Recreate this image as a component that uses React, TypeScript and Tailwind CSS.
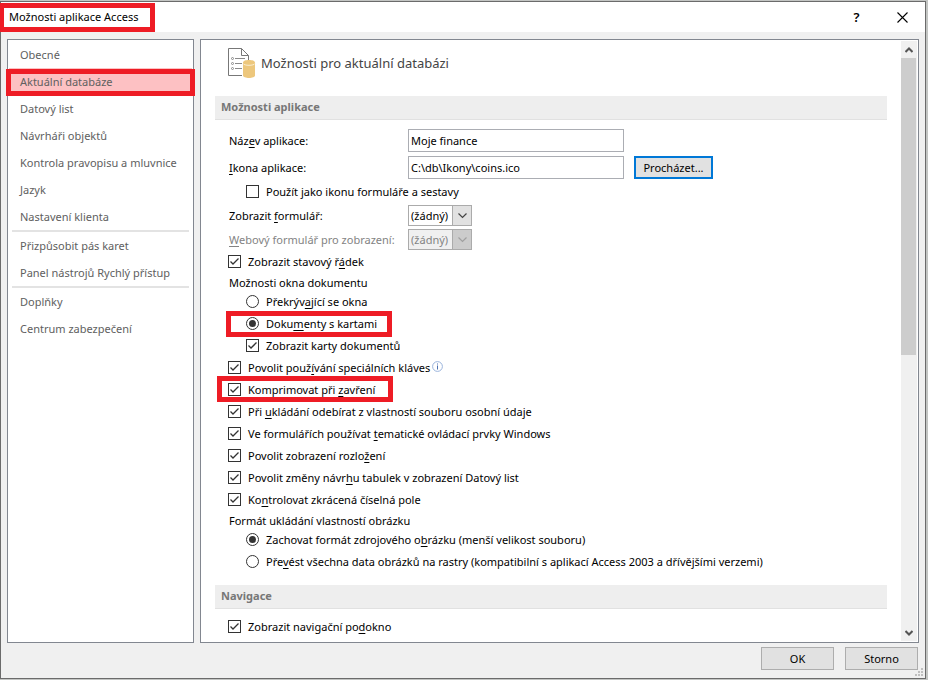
import { useId, useState } from 'react'
import type { ReactNode } from 'react'
import { clsx } from 'clsx'

const NAV_GROUPS = [
  [
    'Obecné',
    'Aktuální databáze',
    'Datový list',
    'Návrháři objektů',
    'Kontrola pravopisu a mluvnice',
    'Jazyk',
    'Nastavení klienta',
  ],
  ['Přizpůsobit pás karet', 'Panel nástrojů Rychlý přístup'],
  ['Doplňky', 'Centrum zabezpečení'],
]

// Underlines the access key, marked with & in front of the letter
function Mnemonic({ text }: { text: string }) {
  const i = text.indexOf('&')
  if (i < 0) return <>{text}</>
  return (
    <>
      {text.slice(0, i)}
      <span className="underline underline-offset-2">{text[i + 1]}</span>
      {text.slice(i + 2)}
    </>
  )
}

function Frame({ className }: { className: string }) {
  return <span className={clsx('pointer-events-none absolute z-10 border-5 border-[#ee1c25]', className)} />
}

interface CheckProps {
  label: string
  indent?: boolean
  defaultChecked?: boolean
  children?: ReactNode
}

function CheckRow({ label, indent, defaultChecked = true, children }: CheckProps) {
  const id = useId()
  return (
    <div className={clsx('relative flex h-[22px] items-start', indent ? 'pl-[31px]' : 'pl-[13px]')}>
      <span className="mt-1 grid size-[13px] shrink-0">
        <input
          id={id}
          type="checkbox"
          defaultChecked={defaultChecked}
          className="peer col-start-1 row-start-1 size-[13px] appearance-none border border-[#333] bg-white"
        />
        <svg
          viewBox="0 0 13 13"
          className="pointer-events-none invisible col-start-1 row-start-1 size-[13px] peer-checked:visible"
        >
          <path d="M2.500 6.500 5 9l5.500-5.500" fill="none" stroke="#333" strokeWidth="1.300" />
        </svg>
      </span>
      <label htmlFor={id} className="ml-[7px] leading-[22px] whitespace-nowrap">
        <Mnemonic text={label} />
      </label>
      {children}
    </div>
  )
}

interface RadioProps {
  name: string
  label: string
  defaultChecked?: boolean
  children?: ReactNode
}

function RadioRow({ name, label, defaultChecked, children }: RadioProps) {
  const id = useId()
  return (
    <div className="relative flex h-[22px] items-start pl-[31px]">
      <span className="mt-1 grid size-[13px] shrink-0 place-items-center">
        <input
          id={id}
          type="radio"
          name={name}
          defaultChecked={defaultChecked}
          className="peer col-start-1 row-start-1 size-[13px] appearance-none rounded-full border border-[#333] bg-white"
        />
        <span className="pointer-events-none invisible col-start-1 row-start-1 size-[7px] rounded-full bg-[#333] peer-checked:visible" />
      </span>
      <label htmlFor={id} className="ml-[7px] leading-[22px] whitespace-nowrap">
        <Mnemonic text={label} />
      </label>
      {children}
    </div>
  )
}

function TextRow({ label, value, children }: { label: string; value: string; children?: ReactNode }) {
  const id = useId()
  return (
    <div className="flex h-[23px] items-center pl-[14px]">
      <label htmlFor={id} className="w-[179px] shrink-0">
        <Mnemonic text={label} />
      </label>
      <input
        id={id}
        type="text"
        defaultValue={value}
        className="h-[23px] w-[216px] border border-[#abadb3] bg-white px-[2px] pb-px outline-none"
      />
      {children}
    </div>
  )
}

function SelectRow({ label, disabled }: { label: string; disabled?: boolean }) {
  const id = useId()
  return (
    <div className={clsx('flex h-[21px] items-center pl-[14px]', disabled && 'text-[#838383]')}>
      <label htmlFor={id} className="w-[179px] shrink-0 whitespace-nowrap">
        <Mnemonic text={label} />
      </label>
      <span className="grid h-[21px] w-16 grid-cols-1">
        <select
          id={id}
          disabled={disabled}
          className={clsx(
            'col-start-1 row-start-1 w-full min-w-0 appearance-none border border-[#ababab] pr-4 pl-[2px] outline-none',
            disabled ? 'bg-[#f0f0f0]' : 'bg-white',
          )}
        >
          <option>(žádný)</option>
        </select>
        <span
          className={clsx(
            'pointer-events-none col-start-1 row-start-1 grid w-5 place-items-center justify-self-end border border-[#ababab]',
            disabled ? 'bg-[#cccccc] text-[#a0a0a0]' : 'bg-[#e1e1e1] text-[#444]',
          )}
        >
          <svg viewBox="0 0 9 6" className="h-[6px] w-[9px]">
            <path d="M.5.5l4 4 4-4" fill="none" stroke="currentColor" strokeWidth="1.200" />
          </svg>
        </span>
      </span>
    </div>
  )
}

function SectionTitle({ children }: { children: ReactNode }) {
  return (
    <h2 className="h-6 border-b border-[#e1e1e1] bg-[#eeeeee] pl-[6px] leading-[22px] font-bold text-[#777]">
      {children}
    </h2>
  )
}

function DatabaseIcon() {
  return (
    <svg viewBox="0 0 28 31" className="h-[31px] w-7 shrink-0">
      <path d="M14 27.500H.5V.5h13l7 7V12M13.500.5v7h7" fill="none" stroke="#777" />
      <g fill="none" stroke="#8a8a8a">
        <circle cx="4.500" cy="10.500" r="1" />
        <circle cx="4.500" cy="15.500" r="1" />
        <circle cx="4.500" cy="20.500" r="1" />
        <path d="M7 10.500h10M7 15.500h7M7 20.500h7" />
      </g>
      <path d="M15 14.500c0-3.300 12-3.300 12 0v13c0 3.300-12 3.300-12 0z" fill="#edc77c" />
      <path d="M15 15.500c1 2.400 11 2.400 12 0" fill="none" stroke="#fbf0d8" strokeWidth=".9" />
    </svg>
  )
}

function InfoIcon() {
  return (
    <svg viewBox="0 0 11 11" className="mt-1 ml-[2px] size-[11px]">
      <circle cx="5.500" cy="5.500" r="4.900" fill="#fff" stroke="#8fabd8" strokeWidth=".9" />
      <path d="M5 2.500h1v1H5zM5 4.500h1v4H5z" fill="#4a6fb0" />
    </svg>
  )
}

function TitleBar() {
  return (
    <header className="relative flex h-[30px] shrink-0 items-center bg-white pl-2">
      <Frame className="top-px -left-[2px] h-[29px] w-[156px]" />
      <h1 className="flex-1">Možnosti aplikace Access</h1>
      <button type="button" aria-label="Nápověda" className="h-full w-[45px] text-[13px] font-semibold">
        ?
      </button>
      <button type="button" aria-label="Zavřít" className="grid h-full w-[46px] place-items-center">
        <svg viewBox="0 0 11 11" className="size-[11px]">
          <path d="M.5.5l10 10M10.500.5l-10 10" stroke="#000" strokeWidth="1.100" />
        </svg>
      </button>
    </header>
  )
}

function Sidebar() {
  const [active, setActive] = useState('Aktuální databáze')
  return (
    <nav className="w-[187px] shrink-0 border border-[#828790] bg-white px-px pt-px text-[#606060]">
      {NAV_GROUPS.map((group, i) => (
        <div key={i}>
          {i > 0 && <hr className="mx-[3px] h-[2px] border-0 bg-[#e3e3e3]" />}
          <ul>
            {group.map((item) => (
              <li key={item} className="relative">
                <button
                  type="button"
                  onClick={() => setActive(item)}
                  className={clsx(
                    'block h-[27px] w-full pl-[11px] text-left whitespace-nowrap',
                    item === active && 'bg-[#fdc1c3]',
                  )}
                >
                  {item}
                </button>
                {item === active && <Frame className="-inset-x-[3px] top-px h-[27px]" />}
              </li>
            ))}
          </ul>
        </div>
      ))}
    </nav>
  )
}

function ScrollBar() {
  return (
    <div className="my-px mr-px flex w-4 shrink-0 flex-col bg-[#f0f0f0]">
      <button type="button" aria-label="Nahoru" className="grid h-[17px] place-items-center">
        <svg viewBox="0 0 8 6" className="h-[6px] w-2">
          <path d="M.5 5 4 1.500 7.500 5" fill="none" stroke="#555" strokeWidth="2" />
        </svg>
      </button>
      <div className="flex-1">
        <div className="mr-px h-[52.5%] bg-[#cdcdcd]" />
      </div>
      <button type="button" aria-label="Dolů" className="grid h-[17px] place-items-center">
        <svg viewBox="0 0 8 6" className="h-[6px] w-2">
          <path d="M.5 1 4 4.500 7.500 1" fill="none" stroke="#555" strokeWidth="2" />
        </svg>
      </button>
    </div>
  )
}

function DatabaseOptions() {
  return (
    <main className="flex min-w-0 flex-1 border border-[#828790] bg-white">
      <div className="min-w-0 flex-1 overflow-hidden px-[14px]">
        <div className="flex h-14 items-start gap-[5px] pt-2 pl-[13px]">
          <DatabaseIcon />
          <p className="text-[13px] leading-[30px] text-[#444]">Možnosti pro aktuální databázi</p>
        </div>

        <SectionTitle>Možnosti aplikace</SectionTitle>
        <div className="mt-[9px] flex flex-col gap-1">
          <TextRow label="Náz&ev aplikace:" value="Moje finance" />
          <TextRow label="&Ikona aplikace:" value="C:\db\Ikony\coins.ico">
            <button type="button" className="ml-[10px] h-[23px] w-[79px] border-2 border-[#0078d7] bg-[#e1e1e1]">
              Procházet...
            </button>
          </TextRow>
        </div>
        <div className="my-[2px]">
          <CheckRow indent defaultChecked={false} label="Použít jako ikonu formuláře a sestavy" />
        </div>
        <div className="mb-px flex flex-col gap-[3px]">
          <SelectRow label="Zobrazit &formulář:" />
          <SelectRow label="&Webový formulář pro zobrazení:" disabled />
        </div>
        <CheckRow label="Zobrazit stavový ř&ádek" />

        <fieldset>
          <legend className="h-[18px] pl-[14px] leading-[20px]">Možnosti okna dokumentu</legend>
          <RadioRow name="okna" label="Překrýv&ající se okna" />
          <RadioRow name="okna" label="Doku&menty s kartami" defaultChecked>
            <Frame className="-top-[2px] left-[11px] h-[26px] w-[166px]" />
          </RadioRow>
          <CheckRow indent label="Zobrazit karty dokumentů" />
        </fieldset>

        <CheckRow label="Povolit použ&ívání speciálních kláves">
          <InfoIcon />
        </CheckRow>
        <CheckRow label="Komprimovat při &zavření">
          <Frame className="-top-[3px] left-[2px] h-[26px] w-[176px]" />
        </CheckRow>
        <CheckRow label="Při &ukládání odebírat z vlastností souboru osobní údaje" />
        <CheckRow label="Ve formulářích používat &tematické ovládací prvky Windows" />
        <CheckRow label="Povolit zobrazení rozlo&žení" />
        <CheckRow label="Povolit změny návr&hu tabulek v zobrazení Datový list" />
        <CheckRow label="Ko&ntrolovat zkrácená číselná pole" />

        <fieldset>
          <legend className="h-[18px] pl-[14px] leading-[20px]">Formát ukládání vlastností obrázku</legend>
          <RadioRow name="obrazky" label="Zachovat formát zdrojového o&brázku (menší velikost souboru)" defaultChecked />
          <RadioRow
            name="obrazky"
            label="Pře&vést všechna data obrázků na rastry (kompatibilní s aplikací Access 2003 a dřívějšími verzemi)"
          />
        </fieldset>

        <div className="mt-3">
          <SectionTitle>Navigace</SectionTitle>
        </div>
        <div className="mt-[7px]">
          <CheckRow label="Zobrazit navigační po&dokno" />
        </div>
      </div>
      <ScrollBar />
    </main>
  )
}

export default function App() {
  return (
    <div className="flex h-screen flex-col bg-[#c3c5c3] pt-px pr-[2px] pb-px font-['Noto_Sans','Open_Sans',sans-serif] text-[11px] leading-4 text-black">
      <div className="flex min-h-0 flex-1 flex-col border border-[#6b6b6b] bg-[#f0f0f0]">
        <TitleBar />
        <div className="flex min-h-0 flex-1 gap-[6px] px-[6px] pt-[7px]">
          <Sidebar />
          <DatabaseOptions />
        </div>
        <footer className="relative flex shrink-0 justify-end gap-[11px] pt-1 pr-[7px] pb-2">
          <button type="button" className="h-[23px] w-[73px] border border-[#adadad] bg-[#e1e1e1]">
            OK
          </button>
          <button type="button" className="h-[23px] w-[73px] border border-[#adadad] bg-[#e1e1e1]">
            Storno
          </button>
          <svg viewBox="0 0 8 8" className="absolute right-[2px] bottom-[2px] size-2">
            <path d="M6 0h2v2H6zM3 3h2v2H3zM6 3h2v2H6zM0 6h2v2H0zM3 6h2v2H3zM6 6h2v2H6z" fill="#bfbfbf" />
          </svg>
        </footer>
      </div>
    </div>
  )
}
